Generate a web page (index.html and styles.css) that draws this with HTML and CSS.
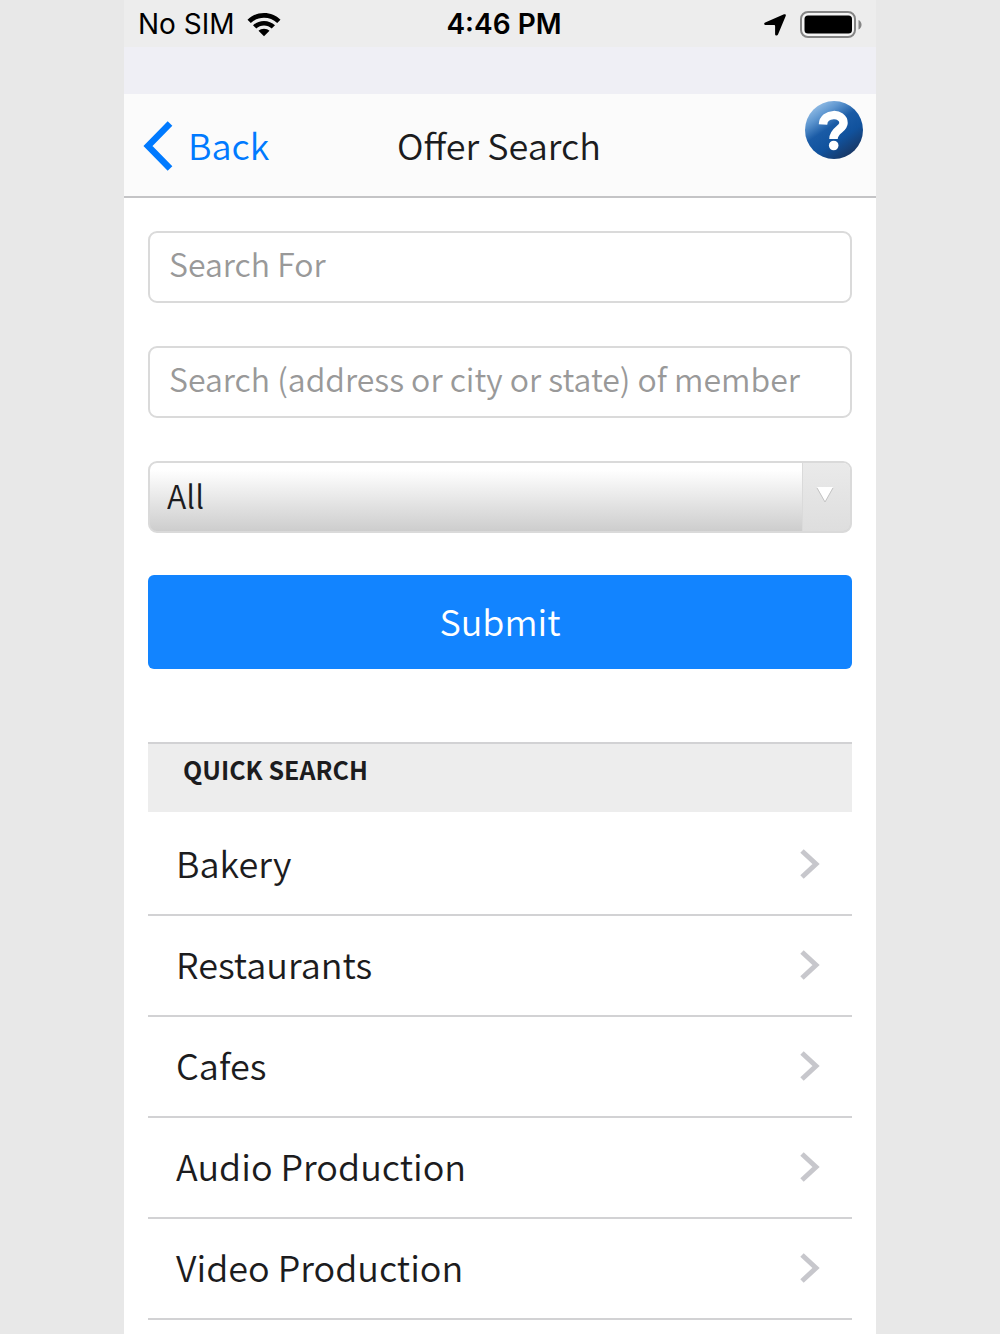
FILE: index.html
```html
<!DOCTYPE html>
<html lang="en">
<head>
<meta charset="utf-8">
<meta name="viewport" content="width=device-width, initial-scale=1">
<title>Offer Search</title>
<link rel="stylesheet" href="styles.css">
</head>
<body>
<div class="phone">
  <div class="status">
    <div class="status-left">
      <span>No SIM</span>
      <svg width="34" height="24" viewBox="0 0 34 24" aria-hidden="true">
        <path d="M17 0C23.500 0 29 2.400 33.500 6.700L30.200 10C26.500 6.500 22 4.700 17 4.700S7.500 6.500 3.800 10L.5 6.700C5 2.400 10.500 0 17 0z"/>
        <path d="M17 8C21.300 8 25 9.600 28 12.300L24.700 15.500C22.500 13.600 20 12.500 17 12.500S11.500 13.600 9.300 15.500L6 12.300C9 9.600 12.700 8 17 8z"/>
        <path d="M17 15.700C19.200 15.700 21.100 16.500 22.500 17.800L17 23.300L11.500 17.800C12.900 16.500 14.800 15.700 17 15.700z"/>
      </svg>
    </div>
    <span class="clock">4:46 PM</span>
    <div class="status-right">
      <svg width="22" height="22" viewBox="0 0 22 22" aria-hidden="true">
        <path d="M20 .3C21.400-.2 22.200.6 21.700 2L14 20.600C13.400 21.900 11.100 21.700 11.100 20.200V12C11.100 11.300 10.800 11 10.200 11H1.700C-.1 11-.4 9.100 1.200 8.400z"/>
      </svg>
      <svg width="62" height="27" viewBox="0 0 62 27" aria-hidden="true">
        <rect x="1" y="1" width="54" height="25" rx="7" fill="#f4f4f4" stroke="#858585" stroke-width="2"/>
        <rect x="4.500" y="4.500" width="47.500" height="18" rx="3.500"/>
        <path d="M58.500 9C62.500 10.500 62.500 17 58.500 18.500z" fill="#858585"/>
      </svg>
    </div>
  </div>

  <header class="navbar">
    <a class="back" href="#">
      <svg width="30" height="50" viewBox="0 0 30 50" aria-hidden="true"><path d="M27 2.500L5 25L27 47.500" fill="none" stroke="#007aff" stroke-width="6.500"/></svg>
      <span>Back</span>
    </a>
    <h1 class="title">Offer Search</h1>
    <button class="help" type="button" aria-label="Help">
      <svg width="60" height="60" viewBox="0 0 60 60" aria-hidden="true">
        <defs>
          <linearGradient id="ball" x1="0.150" y1="0.050" x2="0.750" y2="0.950">
            <stop offset="0" stop-color="#9cc4ea"/>
            <stop offset="0.220" stop-color="#5f97d0"/>
            <stop offset="0.450" stop-color="#1a5ba6"/>
            <stop offset="0.700" stop-color="#11529d"/>
            <stop offset="1" stop-color="#183765"/>
          </linearGradient>
        </defs>
        <circle cx="30" cy="30" r="29" fill="url(#ball)"/>
        <path d="M19 24.500C19.500 12.500 39.500 12 39.500 23C39.500 29.500 29.500 30 29.500 39" fill="none" stroke="#fff" stroke-width="8.500"/>
        <circle cx="29.700" cy="45.500" r="4.800" fill="#fff"/>
      </svg>
    </button>
  </header>

  <main class="content">
    <form class="form">
      <input class="field" type="text" placeholder="Search For" aria-label="Search For">
      <input class="field" type="text" placeholder="Search (address or city or state) of member" aria-label="Search (address or city or state) of member">
      <div class="select">
        <select class="field category" aria-label="Category"><option>All</option></select>
        <span class="arrow">
          <svg width="18" height="18" viewBox="0 0 18 18" aria-hidden="true"><path d="M1 1H17L9 16z" fill="#fff"/><path d="M1 2L9 16L17 2" fill="none" stroke="#c4c4c4"/></svg>
        </span>
      </div>
      <button class="submit" type="submit">Submit</button>
    </form>

    <section>
      <h2 class="section-title">QUICK SEARCH</h2>
      <ul class="list">
        <li><a class="row" href="#">Bakery<svg class="chevron" width="20" height="30" viewBox="0 0 20 30" aria-hidden="true"><path d="M2 2L16 15L2 28"/></svg></a></li>
        <li><a class="row" href="#">Restaurants<svg class="chevron" width="20" height="30" viewBox="0 0 20 30" aria-hidden="true"><path d="M2 2L16 15L2 28"/></svg></a></li>
        <li><a class="row" href="#">Cafes<svg class="chevron" width="20" height="30" viewBox="0 0 20 30" aria-hidden="true"><path d="M2 2L16 15L2 28"/></svg></a></li>
        <li><a class="row" href="#">Audio Production<svg class="chevron" width="20" height="30" viewBox="0 0 20 30" aria-hidden="true"><path d="M2 2L16 15L2 28"/></svg></a></li>
        <li><a class="row" href="#">Video Production<svg class="chevron" width="20" height="30" viewBox="0 0 20 30" aria-hidden="true"><path d="M2 2L16 15L2 28"/></svg></a></li>
      </ul>
    </section>
  </main>
</div>
</body>
</html>
```
FILE: styles.css
```css
* { box-sizing: border-box; }

body {
  margin: 0;
  background: #e8e8e8;
  color: #1c1c1e;
  font-family: "Noto Sans CJK SC", "Noto Sans", sans-serif;
  font-size: 36px;
  font-weight: 350;
  line-height: 48px;
}

h1, h2, ul { margin: 0; padding: 0; }
button, input, select { font: inherit; }

.phone {
  max-width: 752px;
  min-height: 100vh;
  margin: 0 auto;
  background: #fff;
}

.status {
  display: grid;
  grid-template-columns: 1fr auto 1fr;
  align-items: center;
  padding: 2px 14px 0;
  border-bottom: 47px solid #efeff5;
  background: #ededed;
  color: #000;
  font-family: Inter, sans-serif;
  font-size: 28px;
  font-weight: 400;
  line-height: 45px;
}

.status-left, .status-right {
  display: flex;
  align-items: center;
  gap: 12px;
}

.status-right { justify-content: flex-end; gap: 14px; }
.clock { font-weight: 600; padding-left: 8px; }

.navbar {
  display: grid;
  grid-template-columns: 1fr auto 1fr;
  align-items: center;
  height: 104px;
  padding: 0 12px;
  border-bottom: 2px solid #c4c4c6;
  background: #fbfbfb;
}

.back {
  display: flex;
  align-items: center;
  gap: 15px;
  padding: 2px 0 0 7px;
  color: #007aff;
  text-decoration: none;
}

.back span { padding-bottom: 4px; }

.title {
  padding: 0 2px 2px 0;
  font-size: 36px;
  font-weight: inherit;
}

.help {
  align-self: start;
  justify-self: end;
  display: flex;
  margin-top: 6px;
  padding: 0;
  border: 0;
  background: none;
}

.content { padding: 33px 24px 0; }

.form { display: grid; gap: 43px; }

.field {
  display: block;
  width: 100%;
  height: 72px;
  padding: 0 19px 8px;
  border: 2px solid #dadada;
  border-radius: 9px;
  background: #fff;
  color: #1c1c1e;
  font-size: 32px;
}

.field::placeholder { color: #999; opacity: 1; }

.select { position: relative; }

.category {
  appearance: none;
  padding: 0 64px 4px 17px;
  background: linear-gradient(#fff 10%, #cdcdcd);
}

.arrow {
  position: absolute;
  inset: 2px 2px 2px auto;
  display: flex;
  align-items: center;
  justify-content: center;
  width: 48px;
  padding: 0 4px 4px 0;
  border-left: 1px solid #dadada;
  border-radius: 0 7px 7px 0;
  background: linear-gradient(#eaeaea, #dedede);
  pointer-events: none;
}

.submit {
  height: 94px;
  margin-top: -1px;
  padding: 0 0 4px;
  border: 0;
  border-radius: 6px;
  background: #1284ff;
  color: #fff;
}

.section-title {
  height: 70px;
  margin-top: 73px;
  padding: 1px 35px;
  border-top: 2px solid #d2d2d4;
  background: #ededed;
  font-size: 25px;
  font-weight: 700;
}

.list { padding-top: 3px; list-style: none; }

.row {
  display: flex;
  align-items: center;
  justify-content: space-between;
  height: 101px;
  padding: 0 32px 6px 28px;
  border-bottom: 2px solid #d2d2d4;
  color: inherit;
  text-decoration: none;
}

.chevron {
  margin-top: 4px;
  fill: none;
  stroke: #c7c7cc;
  stroke-width: 5px;
}
```
